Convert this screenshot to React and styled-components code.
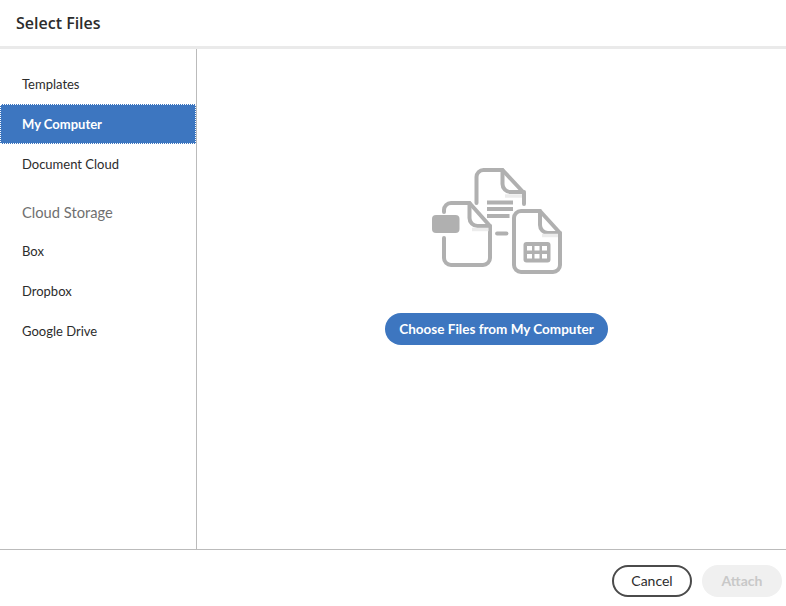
import React from "react";
import styled, { createGlobalStyle } from "styled-components";

const Global = createGlobalStyle`
  html, body { margin: 0; padding: 0; height: 100%; overflow: hidden; background: #fff; }
  body { font-family: Lato, "Open Sans", sans-serif; color: #2c2c2c; }
  #root { height: 100%; }
`;

const Dialog = styled.div`
  display: flex;
  flex-direction: column;
  height: 606px;
  width: 786px;
`;

const Header = styled.header`
  height: 49px;
  box-sizing: border-box;
  border-bottom: 3px solid #eaeaea;
  padding-left: 16px;
  display: flex;
  align-items: center;
`;

const Title = styled.h1`
  margin: 0;
  font: 600 16px "Open Sans", sans-serif;
  color: #2c2c2c;
`;

const Body = styled.div`
  display: flex;
  height: 500px;
`;

const Sidebar = styled.nav`
  width: 197px;
  box-sizing: border-box;
  border-right: 1px solid #bbbbbb;
  padding-top: 15px;
`;

const Item = styled.div`
  height: 40px;
  display: flex;
  align-items: center;
  padding: 0 0 0 22px;
  font-size: 13px;
  box-sizing: border-box;
  color: ${(p) => (p.$active ? "#fff" : "#2c2c2c")};
  font-weight: ${(p) => (p.$active ? 700 : 400)};
  background: ${(p) => (p.$active ? "#3d76c0" : "transparent")};
  outline: ${(p) => (p.$active ? "1px dotted #fff" : "none")};
  outline-offset: -1px;
`;

const Section = styled.div`
  height: 47px;
  display: flex;
  align-items: center;
  padding: 8px 0 0 22px;
  box-sizing: border-box;
  font-size: 14.7px;
  color: #707070;
`;

const Main = styled.main`
  flex: 1;
  display: flex;
  flex-direction: column;
  align-items: center;
  padding: 117px 0 0 10px;
`;

const Art = styled.svg`
  display: block;
  width: 132px;
  height: 112px;
  margin-bottom: 35px;
`;

const Primary = styled.button`
  height: 32px;
  width: 223px;
  border: 0;
  border-radius: 16px;
  background: #3d76c0;
  color: #fff;
  font: 700 13.5px Lato, "Open Sans", sans-serif;
  padding: 0 0 1px;
`;

const Footer = styled.footer`
  height: 57px;
  box-sizing: border-box;
  border-top: 1px solid #bbbbbb;
  display: flex;
  justify-content: flex-end;
  align-items: flex-start;
  gap: 10px;
  padding: 15px 4px 0 0;
`;

const Action = styled.button`
  width: 80px;
  height: 32px;
  box-sizing: border-box;
  border-radius: 16px;
  padding: 0 0 2px;
  font: ${(p) => (p.disabled ? 700 : 400)} 14px Lato, "Open Sans", sans-serif;
  color: ${(p) => (p.disabled ? "#c8c8c8" : "#2c2c2c")};
  background: ${(p) => (p.disabled ? "#f0f0f0" : "#fff")};
  border: ${(p) => (p.disabled ? "0" : "2px solid #4b4b4b")};
`;

const FilesArt = () => (
  <Art viewBox="431 166 132 112" fill="none" stroke="#b0b0b0" strokeWidth="4" strokeLinejoin="round" strokeLinecap="round">
    {/* back page */}
    <path d="M476.500 203V177a7 7 0 0 1 7-7h19l21.500 23v11" />
    <path d="M502.500 170v14a8 8 0 0 0 8 8h13.500" />
    <path d="M505 196h17" stroke="#ececec" strokeWidth="3.500" strokeLinecap="butt" />
    <path d="M487 202.500h26M487 209h26M487 216h22.500" strokeWidth="3.800" strokeLinecap="butt" />
    <path d="M497 233.500h9.500" strokeWidth="3.800" />
    {/* left page */}
    <path d="M444 212v-2a7 7 0 0 1 7-7h18.500l20.500 23v32a7 7 0 0 1-7 7h-32a7 7 0 0 1-7-7v-20" />
    <path d="M469.500 203v15a8 8 0 0 0 8 8h12.500" />
    <path d="M472 229.500h16.500" stroke="#ececec" strokeWidth="3.500" strokeLinecap="butt" />
    <rect x="432" y="215" width="27.500" height="18" rx="4" fill="#b0b0b0" stroke="none" />
    {/* right page */}
    <path d="M540 211h-19a7 7 0 0 0-7 7v47a7 7 0 0 0 7 7h32a7 7 0 0 0 7-7v-32z" />
    <path d="M540 211v14a8 8 0 0 0 8 8h12" />
    <path d="M542 235.500h16" stroke="#ececec" strokeWidth="3.500" strokeLinecap="butt" />
    <rect x="523.500" y="242" width="27" height="20.500" rx="3" fill="#b0b0b0" stroke="none" />
    <path d="M527 246h5v4.500h-5zM534.500 246h5v4.500h-5zM542 246h5v4.500h-5zM527 254h5v4.500h-5zM534.500 254h5v4.500h-5zM542 254h5v4.500h-5z" fill="#ffffff" stroke="none" />
  </Art>
);

export default function App() {
  return (
    <Dialog>
      <Global />
      <Header>
        <Title>Select Files</Title>
      </Header>
      <Body>
        <Sidebar>
          <Item>Templates</Item>
          <Item $active>My Computer</Item>
          <Item>Document Cloud</Item>
          <Section>Cloud Storage</Section>
          <Item>Box</Item>
          <Item>Dropbox</Item>
          <Item>Google Drive</Item>
        </Sidebar>
        <Main>
          <FilesArt />
          <Primary>Choose Files from My Computer</Primary>
        </Main>
      </Body>
      <Footer>
        <Action>Cancel</Action>
        <Action disabled>Attach</Action>
      </Footer>
    </Dialog>
  );
}
